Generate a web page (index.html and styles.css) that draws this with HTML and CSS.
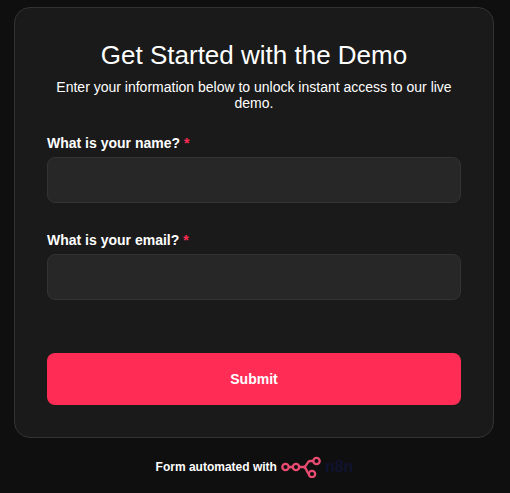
FILE: index.html
```html
<!DOCTYPE html>
<html lang="en">
<head>
<meta charset="utf-8">
<title>Get Started with the Demo</title>
<link rel="stylesheet" href="styles.css">
</head>
<body>
<main class="page">
  <form class="card">
    <header class="head">
      <h1 class="title">Get Started with the Demo</h1>
      <p class="subtitle">Enter your information below to unlock instant access to our live demo.</p>
    </header>
    <div class="field">
      <label class="label" for="name">What is your name? <span class="req">*</span></label>
      <input class="input" id="name" type="text">
    </div>
    <div class="field">
      <label class="label" for="email">What is your email? <span class="req">*</span></label>
      <input class="input" id="email" type="email">
    </div>
    <button class="submit" type="button">Submit</button>
  </form>
  <footer class="foot">
    <span>Form automated with</span>
    <svg class="logo" width="40" height="22" viewBox="0 0 40 22" fill="none" stroke="#ea4b71" stroke-width="2.300">
      <circle cx="4.500" cy="11" r="3.200"/>
      <circle cx="15" cy="11" r="3.200"/>
      <circle cx="31" cy="18" r="3.200"/>
      <circle cx="35.500" cy="5" r="3.200"/>
      <path d="M7.700 11h4.100M18.200 11h4.300c3.500 0 3.500-6 6.500-6h3.300M22.500 11c3.500 0 3.500 7 5.300 7"/>
    </svg>
    <span class="brand">n8n</span>
  </footer>
</main>
</body>
</html>
```
FILE: styles.css
```css
* { box-sizing: border-box; }
html, body { margin: 0; height: 100%; }
body {
  background: #0f0f0f;
  font-family: "Liberation Sans", Arial, sans-serif;
  color: #fff;
  overflow: hidden;
}
.page {
  width: 480px;
  margin-left: 14px;
  padding-top: 7px;
  display: flex;
  flex-direction: column;
}
.card {
  height: 431px;
  background: #1a1a1a;
  border: 1px solid #333;
  border-radius: 16px;
  padding: 33px 32px 32px;
  display: flex;
  flex-direction: column;
}
.head { text-align: center; margin-bottom: 24px; }
.title {
  margin: 0 0 9px;
  font-size: 26px;
  line-height: 29px;
  font-weight: 400;
}
.subtitle {
  margin: 0;
  font-size: 14px;
  line-height: 16px;
}
.field { display: flex; flex-direction: column; margin-bottom: 29px; }
.label {
  font-size: 14px;
  line-height: 16px;
  font-weight: 700;
  margin-bottom: 6px;
}
.req { color: #ff2d55; }
.input {
  height: 46px;
  background: #272727;
  border: 1px solid #333;
  border-radius: 8px;
  outline: none;
}
.submit {
  height: 52px;
  margin-top: 24px;
  background: #ff2d55;
  border: 0;
  border-radius: 8px;
  color: #fff;
  font: 700 14px "Liberation Sans", Arial, sans-serif;
}
.foot {
  display: flex;
  align-items: center;
  justify-content: center;
  margin-top: 18px;
  font-size: 12px;
  font-weight: 700;
  gap: 4px;
}
.brand {
  color: #101330;
  font-size: 16px;
  margin-right: -1px;
}
```
